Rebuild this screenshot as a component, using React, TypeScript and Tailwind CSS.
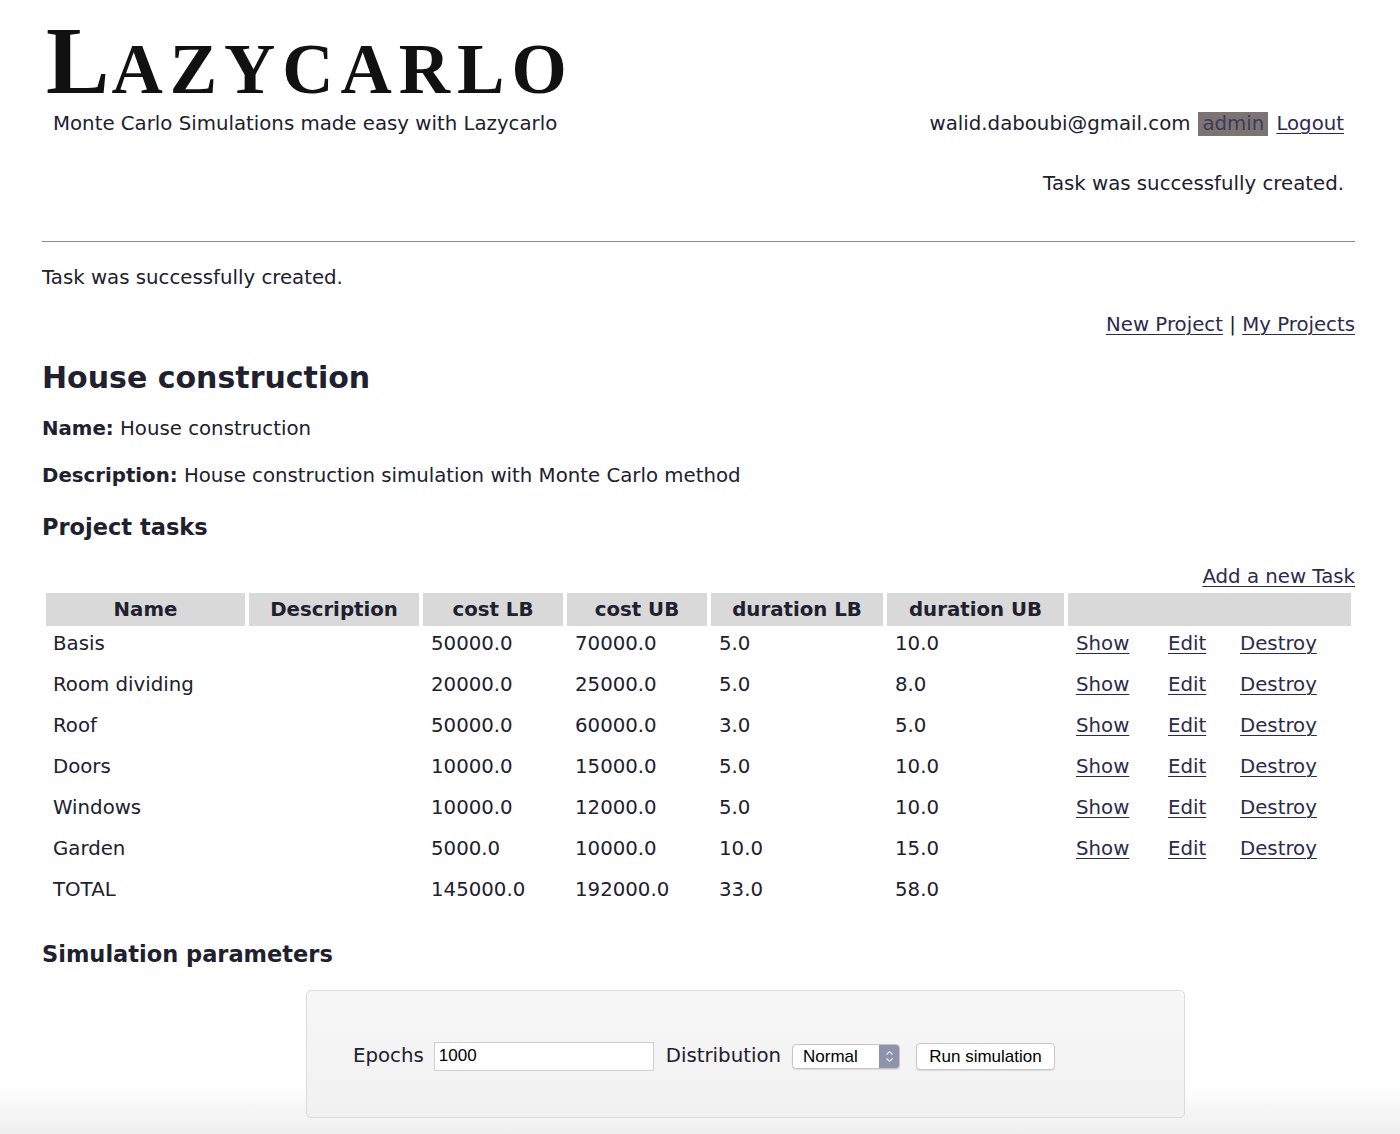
import React from 'react';

interface Task {
  name: string;
  costLb: string;
  costUb: string;
  durLb: string;
  durUb: string;
}

const tasks: Task[] = [
  { name: 'Basis', costLb: '50000.0', costUb: '70000.0', durLb: '5.0', durUb: '10.0' },
  { name: 'Room dividing', costLb: '20000.0', costUb: '25000.0', durLb: '5.0', durUb: '8.0' },
  { name: 'Roof', costLb: '50000.0', costUb: '60000.0', durLb: '3.0', durUb: '5.0' },
  { name: 'Doors', costLb: '10000.0', costUb: '15000.0', durLb: '5.0', durUb: '10.0' },
  { name: 'Windows', costLb: '10000.0', costUb: '12000.0', durLb: '5.0', durUb: '10.0' },
  { name: 'Garden', costLb: '5000.0', costUb: '10000.0', durLb: '10.0', durUb: '15.0' },
];

const link = 'underline underline-offset-[3px] decoration-1 text-[#2b2b4d]';

const App: React.FC = () => {
  return (
    <div className="min-h-screen bg-[linear-gradient(to_bottom,#ffffff_0,#ffffff_1085px,#eeeeee_1134px)] text-[#20202f] font-['DejaVu_Sans',sans-serif] text-[19.75px] leading-[24px]">
      <div className="pl-[42px] pr-[45px]">
        {/* header */}
        <div className="pt-[14px] pl-[4px] h-[112px] font-['Liberation_Serif',serif] font-bold text-[#111] leading-[95px] whitespace-nowrap">
          <span className="text-[95px] tracking-[2px]">L</span>
          <span className="text-[71px] tracking-[7px]">AZYCARLO</span>
        </div>
        <div className="flex justify-between pr-[11px]">
          <div className="pl-[11px]">Monte Carlo Simulations made easy with Lazycarlo</div>
          <div className="flex items-center gap-[8px]">
            <span>walid.daboubi@gmail.com</span>
            <span className="bg-[#7e7373] text-[#3b3b5c] px-[4px]">admin</span>
            <a href="#" className={link}>Logout</a>
          </div>
        </div>
        <div className="mt-[36px] pr-[11px] text-right">Task was successfully created.</div>
        <hr className="mt-[45px] border-0 border-t border-[#8a8a8a]" />

        <div className="mt-[24px]">Task was successfully created.</div>
        <div className="mt-[23px] text-right">
          <a href="#" className={link}>New Project</a> | <a href="#" className={link}>My Projects</a>
        </div>

        <h2 className="mt-[23px] text-[30px] leading-[36px] font-bold">House construction</h2>
        <p className="mt-[21px]"><b>Name:</b> House construction</p>
        <p className="mt-[23px]"><b>Description:</b> House construction simulation with Monte Carlo method</p>
        <h3 className="mt-[25px] text-[22.5px] leading-[28px] font-bold">Project tasks</h3>
        <div className="mt-[24px] text-right">
          <a href="#" className={link}>Add a new Task</a>
        </div>

        <table className="w-full border-separate border-spacing-[4px]">
          <thead>
            <tr className="h-[33px] font-bold">
              <th className="w-[199px] bg-[#d9d9d9]">Name</th>
              <th className="w-[170px] bg-[#d9d9d9]">Description</th>
              <th className="w-[140px] bg-[#d9d9d9]">cost LB</th>
              <th className="w-[140px] bg-[#d9d9d9]">cost UB</th>
              <th className="w-[172px] bg-[#d9d9d9]">duration LB</th>
              <th className="w-[177px] bg-[#d9d9d9]">duration UB</th>
              <th colSpan={3} className="bg-[#d9d9d9]"></th>
            </tr>
          </thead>
          <tbody>
            {tasks.map((t) => (
              <tr key={t.name} className="h-[37px] align-top">
                <td className="px-[7px] pt-[2px]">{t.name}</td>
                <td className="px-[8px] pt-[2px]"></td>
                <td className="px-[8px] pt-[2px]">{t.costLb}</td>
                <td className="px-[8px] pt-[2px]">{t.costUb}</td>
                <td className="px-[8px] pt-[2px]">{t.durLb}</td>
                <td className="px-[8px] pt-[2px]">{t.durUb}</td>
                <td className="w-[88px] px-[8px] pt-[2px]"><a href="#" className={link}>Show</a></td>
                <td className="w-[68px] px-[8px] pt-[2px]"><a href="#" className={link}>Edit</a></td>
                <td className="px-[8px] pt-[2px]"><a href="#" className={link}>Destroy</a></td>
              </tr>
            ))}
            <tr className="h-[37px] align-top">
              <td className="px-[7px] pt-[2px]">TOTAL</td>
              <td></td>
              <td className="px-[8px] pt-[2px]">145000.0</td>
              <td className="px-[8px] pt-[2px]">192000.0</td>
              <td className="px-[8px] pt-[2px]">33.0</td>
              <td className="px-[8px] pt-[2px]">58.0</td>
              <td></td>
              <td></td>
              <td></td>
            </tr>
          </tbody>
        </table>

        <h3 className="mt-[23px] text-[22.5px] leading-[28px] font-bold">Simulation parameters</h3>

        <div className="mt-[22px] ml-[264px] w-[879px] h-[128px] pt-[4px] bg-[linear-gradient(to_bottom,#f7f7f7,#f1f1f1)] border border-[#dcdcdc] rounded-[5px] flex items-center pl-[46px]">
          <span>Epochs</span>
          <input
            defaultValue="1000"
            className="ml-[10px] w-[220px] h-[29px] bg-white border border-[#cfcfcf] px-[4px] text-[17px] text-black font-['Liberation_Sans',sans-serif] outline-none"
          />
          <span className="ml-[12px]">Distribution</span>
          <div className="ml-[11px] w-[108px] h-[25px] bg-white border border-[#c4c4c4] rounded-[4px] flex items-stretch overflow-hidden shadow-[0_1px_1px_rgba(0,0,0,0.1)]">
            <span className="flex-1 pl-[10px] text-[17px] leading-[23px] text-black font-['Liberation_Sans',sans-serif]">Normal</span>
            <span className="w-[20px] bg-[#8e93ab] flex items-center justify-center">
              <svg width="9" height="15" viewBox="0 0 9 15" fill="none" stroke="#e8e8f0" strokeWidth="1.2">
                <path d="M1.5 5.5 L4.5 2.5 L7.5 5.5" />
                <path d="M1.5 9.5 L4.5 12.5 L7.5 9.5" />
              </svg>
            </span>
          </div>
          <button className="ml-[16px] w-[139px] h-[27px] bg-white border border-[#c8c8c8] rounded-[4px] text-[17px] leading-[25px] text-black font-['Liberation_Sans',sans-serif] shadow-[0_1px_1px_rgba(0,0,0,0.1)]">
            Run simulation
          </button>
        </div>
      </div>
    </div>
  );
};

export default App;
